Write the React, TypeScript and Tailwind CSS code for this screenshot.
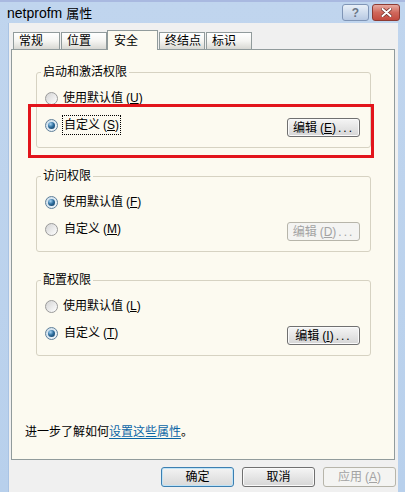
import type { ReactNode } from "react";
import clsx from "clsx";

function Mn({ k }: { k: string }) {
  return (
    <span className="ml-[3px] font-['Liberation_Sans',sans-serif]">
      (<span className="underline underline-offset-[1px]">{k}</span>)
    </span>
  );
}

function Radio({ checked }: { checked?: boolean }) {
  return (
    <span
      className={clsx(
        "flex h-[13px] w-[13px] shrink-0 items-center justify-center rounded-full border",
        checked
          ? "border-[#5f7f99] bg-linear-to-br from-[#c9dcea] to-[#f4f8fb]"
          : "border-[#9a9a9a] bg-linear-to-br from-[#d4d4d4] to-white"
      )}
    >
      {checked && (
        <span className="h-[7px] w-[7px] rounded-full bg-[radial-gradient(circle_at_35%_30%,#a9d6f5_0%,#2f6f9f_45%,#0c3456_100%)]" />
      )}
    </span>
  );
}

function Btn({
  children,
  disabled,
  primary,
  className,
}: {
  children: ReactNode;
  disabled?: boolean;
  primary?: boolean;
  className?: string;
}) {
  return (
    <button
      type="button"
      className={clsx(
        "flex w-[73px] shrink-0 items-center justify-center rounded-[3px] border text-[12px] leading-none",
        disabled
          ? "border-[#b7b5aa] bg-[#f4f4f2] text-[#a3a3a3]"
          : primary
            ? "border-[#3c7fb1] bg-linear-to-b from-[#f3f3f3] to-[#d9d9d9] shadow-[inset_0_0_0_1px_#bfe3f7]"
            : "border-[#707070] bg-linear-to-b from-[#f5f5f5] to-[#d6d6d6] shadow-[inset_0_0_0_1px_#fafafa]",
        className
      )}
    >
      {children}
    </button>
  );
}

function Group({
  title,
  keyA,
  keyB,
  keyEdit,
  defaultChecked,
  focused,
  disabledEdit,
  className,
}: {
  title: string;
  keyA: string;
  keyB: string;
  keyEdit: string;
  defaultChecked?: boolean;
  focused?: boolean;
  disabledEdit?: boolean;
  className?: string;
}) {
  return (
    <fieldset className={clsx("ml-[24px] mr-[23px] rounded-[3px] border border-[#d6d2c2]", className)}>
      <legend className="ml-[4px] px-[2px] text-[12px] leading-[16px]">{title}</legend>
      <div className="flex flex-col pb-[10px] pl-[8px] pr-[10px] pt-[9px]">
        <div className="flex h-[18px] items-center gap-[5px]">
          <Radio checked={defaultChecked} />
          <span>
            使用默认值
            <Mn k={keyA} />
          </span>
        </div>
        <div className="mt-[9px] flex items-start justify-between">
          <div className="flex h-[18px] items-center gap-[5px]">
            <Radio checked={!defaultChecked} />
            <span className={clsx("px-[1px]", focused && "outline-1 outline-dotted outline-black")}>
              自定义
              <Mn k={keyB} />
            </span>
          </div>
          <Btn className="mt-[2px] h-[19px]" disabled={disabledEdit}>
            编辑
            <Mn k={keyEdit} />
            <span className="ml-[2px] tracking-[2px]">...</span>
          </Btn>
        </div>
      </div>
    </fieldset>
  );
}

function Tab({ label, selected, className }: { label: string; selected?: boolean; className?: string }) {
  return (
    <div
      className={clsx(
        "flex items-center border-x border-t border-[#919b9c] text-[12px]",
        selected
          ? "relative z-10 -mb-[1px] h-[20px] w-[51px] items-start bg-[#fcfaf0] pl-[6px] pt-[1px]"
          : "h-[17px] w-[46px] bg-linear-to-b from-white via-[#f5f5f2] to-[#d8d8d3] pl-[5px]",
        className
      )}
    >
      {label}
    </div>
  );
}

export default function App() {
  return (
    <div className="relative flex h-[492px] w-[405px] flex-col overflow-hidden border-t-[2px] border-[#a9b9e0] bg-linear-to-b from-[#c0d5ee] to-[#b8d0ec] font-['Liberation_Sans','Noto_Sans_CJK_SC',sans-serif] text-[12px] text-black">
      {/* title bar */}
      <div className="flex h-[21px] shrink-0 items-center pl-[7px] pr-[5px]">
        <span className="flex-1 pt-[1px] text-[14px]">
          netprofm <span className="font-['Noto_Sans_CJK_SC',sans-serif] text-[13px]">属性</span>
        </span>
        <div className="flex gap-[3px] self-start pt-[2px]">
          <div className="flex h-[17px] w-[27px] items-center justify-center rounded-[3px] border border-[#7f95b6] bg-linear-to-b from-[#e9f0f8] to-[#b7c9e2] text-[12px] font-bold text-[#6b7787]">
            ?
          </div>
          <div className="flex h-[17px] w-[28px] items-center justify-center rounded-[3px] border border-[#8d3b33] bg-linear-to-b from-[#e6aaa1] via-[#d0685c] to-[#c24a3f]">
            <svg width="11" height="9" viewBox="0 0 11 9">
              <path d="M1.5 1 L9.5 8 M9.5 1 L1.5 8" stroke="#6b2a24" strokeWidth="3.4" strokeLinecap="round" />
              <path d="M1.5 1 L9.5 8 M9.5 1 L1.5 8" stroke="#fff" strokeWidth="2" strokeLinecap="round" />
            </svg>
          </div>
        </div>
      </div>

      {/* client area */}
      <div className="ml-[8px] flex w-[390px] flex-1 flex-col border-l border-[#a9c3e3] bg-[#f0f0f0] pt-[7px]">
        <div className="ml-[3px] flex h-[19px] items-end">
          <Tab label="常规" className="ml-[1px] w-[47px]" />
          <Tab label="位置" className="ml-[1px]" />
          <Tab label="安全" selected />
          <Tab label="终结点" className="ml-[1px]" />
          <Tab label="标识" className="ml-[1px]" />
        </div>
        <div className="ml-[2px] flex h-[411px] w-[384px] flex-col border border-[#919b9c] bg-[#fcfaf0] pt-[14px]">
          <Group title="启动和激活权限" keyA="U" keyB="S" keyEdit="E" focused />
          <Group title="访问权限" keyA="F" keyB="M" keyEdit="D" defaultChecked disabledEdit className="mt-[20px]" />
          <Group title="配置权限" keyA="L" keyB="T" keyEdit="I" className="mt-[20px]" />
          <p className="mt-[68px] pl-[13px] leading-[16px]">
            进一步了解如何
            <span className="text-[#0b66a6] underline underline-offset-[2px]">设置这些属性</span>。
          </p>
        </div>
        <div className="mr-[2px] mt-[7px] flex justify-end gap-[8px]">
          <Btn primary className="h-[20px]">确定</Btn>
          <Btn className="h-[20px]">取消</Btn>
          <Btn disabled className="h-[20px]">
            应用
            <Mn k="A" />
          </Btn>
        </div>
      </div>

      {/* annotation */}
      <div className="pointer-events-none absolute left-[28px] top-[102px] h-[54px] w-[346px] border-[3px] border-[#e2141b]" />
    </div>
  );
}
